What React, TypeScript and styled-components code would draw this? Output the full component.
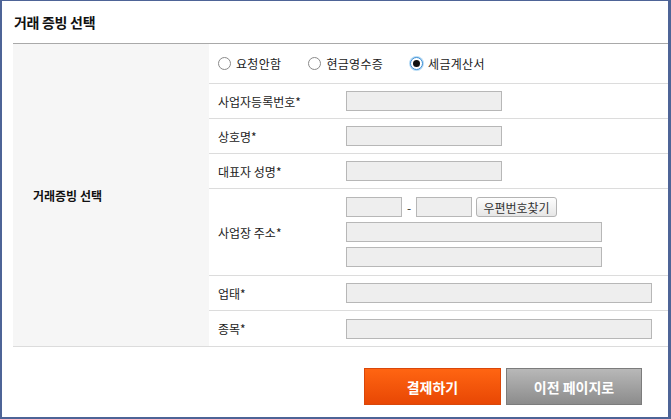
import React, { useState } from "react"
import styled, { createGlobalStyle } from "styled-components"

const GlobalStyle = createGlobalStyle`
  html, body {
    margin: 0;
    padding: 0;
    background: #4e6497;
  }
  body {
    font-family: "Noto Sans CJK KR", "Noto Sans", sans-serif;
    font-size: 12px;
    color: #222;
  }
`

type Option = "none" | "cash" | "tax"

const options: { key: Option; label: string }[] = [
  { key: "none", label: "요청안함" },
  { key: "cash", label: "현금영수증" },
  { key: "tax", label: "세금계산서" }
]

export default function App() {
  const [selected, setSelected] = useState<Option>("tax")

  return (
    <>
      <GlobalStyle />
      <Frame>
        <Panel>
          <Header>
            <Title>거래 증빙 선택</Title>
          </Header>
          <Table>
            <SideCell>거래증빙 선택</SideCell>
            <Body>
              <RadioRow>
                {options.map((o) => (
                  <RadioLabel key={o.key} onClick={() => setSelected(o.key)}>
                    <RadioMark $checked={selected === o.key} />
                    {o.label}
                  </RadioLabel>
                ))}
              </RadioRow>
              <Row>
                <Label>사업자등록번호*</Label>
                <Input $w={156} />
              </Row>
              <Row>
                <Label>상호명*</Label>
                <Input $w={156} />
              </Row>
              <Row>
                <Label>대표자 성명*</Label>
                <Input $w={156} />
              </Row>
              <Row $h={87}>
                <Label>사업장 주소*</Label>
                <AddressStack>
                  <ZipLine>
                    <Input $w={56} />
                    <Dash>-</Dash>
                    <Input $w={56} />
                    <ZipButton>우편번호찾기</ZipButton>
                  </ZipLine>
                  <Input $w={256} />
                  <Input $w={256} />
                </AddressStack>
              </Row>
              <Row>
                <Label>업태*</Label>
                <Input $w={306} />
              </Row>
              <Row>
                <Label>종목*</Label>
                <Input $w={306} />
              </Row>
            </Body>
          </Table>
          <Actions>
            <PayButton>결제하기</PayButton>
            <BackButton>이전 페이지로</BackButton>
          </Actions>
        </Panel>
      </Frame>
    </>
  )
}

// Styled
const Frame = styled.div`
  box-sizing: border-box;
  width: 671px;
  height: 419px;
  padding: 1px 3px 2px 2px;
  background: #4e6497;
`

const Panel = styled.div`
  height: 100%;
  background: #fff;
  padding-left: 11px;
  display: flex;
  flex-direction: column;
`

const Header = styled.div`
  height: 42px;
  border-bottom: 1px solid #a9a9a9;
  display: flex;
  align-items: center;
  padding-left: 1px;
`

const Title = styled.h2`
  margin: 0;
  font-size: 14px;
  font-weight: bold;
  color: #111;
  letter-spacing: -0.3px;
`

const Table = styled.div`
  display: grid;
  grid-template-columns: 196px 1fr;
  border-bottom: 1px solid #dcdcdc;
`

const SideCell = styled.div`
  background: #f6f6f6;
  display: flex;
  align-items: center;
  padding-left: 20px;
  font-weight: bold;
  font-size: 12px;
  color: #111;
`

const Body = styled.div`
  display: flex;
  flex-direction: column;
`

const RadioRow = styled.div`
  height: 39px;
  border-bottom: 1px solid #dcdcdc;
  display: flex;
  align-items: center;
  padding-left: 9px;
  gap: 27px;
`

const RadioLabel = styled.label`
  display: flex;
  align-items: center;
  gap: 5px;
  cursor: pointer;
  color: #222;
  letter-spacing: 0.3px;
`

const RadioMark = styled.span<{ $checked: boolean }>`
  box-sizing: border-box;
  width: 13px;
  height: 13px;
  border-radius: 50%;
  border: 1px solid ${(p) => (p.$checked ? "#3d8fd6" : "#8a8a8a")};
  background: #fff;
  box-shadow: ${(p) => (p.$checked ? "0 0 0 1px #b9dcf5" : "none")};
  position: relative;
  &::after {
    content: "";
    display: ${(p) => (p.$checked ? "block" : "none")};
    position: absolute;
    left: 2px;
    top: 2px;
    width: 7px;
    height: 7px;
    border-radius: 50%;
    background: #111;
  }
`

const Row = styled.div<{ $h?: number }>`
  height: ${(p) => (p.$h ?? 35) - 1}px;
  border-bottom: 1px solid #dcdcdc;
  display: grid;
  grid-template-columns: 128px 1fr;
  align-items: center;
  padding-left: 9px;
  &:last-child {
    border-bottom: none;
    height: 35px;
  }
`

const Label = styled.span`
  color: #222;
  font-size: 12px;
`

const Input = styled.input<{ $w: number }>`
  box-sizing: border-box;
  width: ${(p) => p.$w}px;
  height: 20px;
  margin: 0;
  border: 1px solid #b7b7b7;
  background: #eeeeee;
  outline: none;
`

const AddressStack = styled.div`
  display: flex;
  flex-direction: column;
  gap: 5px;
`

const ZipLine = styled.div`
  display: flex;
  align-items: center;
`

const Dash = styled.span`
  width: 14px;
  text-align: center;
  color: #333;
`

const ZipButton = styled.button`
  box-sizing: border-box;
  margin-left: 4px;
  width: 81px;
  height: 20px;
  padding: 0;
  border: 1px solid #b3b3b3;
  border-radius: 3px;
  background: linear-gradient(#fdfdfd, #e6e6e6);
  font-family: inherit;
  font-size: 12px;
  color: #333;
`

const Actions = styled.div`
  display: flex;
  justify-content: flex-end;
  gap: 5px;
  padding: 21px 26px 0 0;
`

const BigButton = styled.button`
  box-sizing: border-box;
  width: 137px;
  height: 37px;
  font-family: inherit;
  font-size: 14px;
  font-weight: bold;
  color: #fff;
  cursor: pointer;
`

const PayButton = styled(BigButton)`
  border: 1px solid #d9470a;
  background: linear-gradient(#ff6512, #e84704);
`

const BackButton = styled(BigButton)`
  width: 136px;
  border: 1px solid #7c7c7c;
  background: linear-gradient(#b8b8b8, #8c8c8c);
`
